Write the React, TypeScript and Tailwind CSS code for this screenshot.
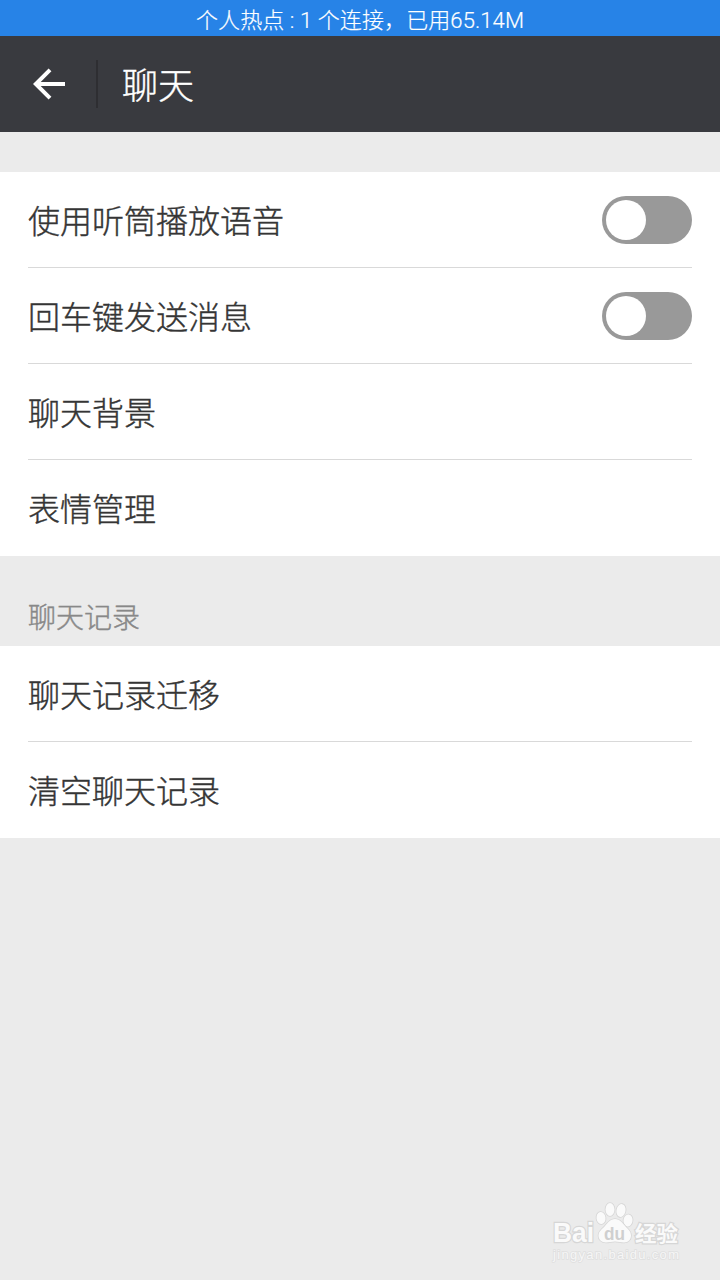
import React, { useState } from 'react';

interface SettingRow {
  label: string;
  toggle?: boolean;
}

const generalRows: SettingRow[] = [
  { label: '使用听筒播放语音', toggle: true },
  { label: '回车键发送消息', toggle: true },
  { label: '聊天背景' },
  { label: '表情管理' },
];

const historyRows: SettingRow[] = [
  { label: '聊天记录迁移' },
  { label: '清空聊天记录' },
];

const Toggle: React.FC<{ label: string }> = ({ label }) => {
  const [on, setOn] = useState(false);

  return (
    <button
      role="switch"
      aria-checked={on}
      aria-label={label}
      onClick={() => setOn(!on)}
      className={`flex h-12 w-[90px] items-center rounded-full p-1 ${
        on ? 'justify-end bg-[#1aad19]' : 'justify-start bg-[#999999]'
      }`}
    >
      <span className="h-10 w-10 rounded-full bg-white" />
    </button>
  );
};

const SettingList: React.FC<{ rows: SettingRow[] }> = ({ rows }) => (
  <ul className="bg-white px-7">
    {rows.map(row => (
      <li
        key={row.label}
        className="flex h-24 items-center justify-between border-b border-[#d9d9d9] last:border-white"
      >
        <span className="pb-[2px] text-[32px] leading-[48px] text-[#353535]">{row.label}</span>
        {row.toggle && <Toggle label={row.label} />}
      </li>
    ))}
  </ul>
);

// Paw mark with the site name on both sides
const Watermark: React.FC = () => (
  <svg
    width="140"
    height="70"
    viewBox="0 0 140 70"
    className="font-['Liberation_Sans','Noto_Sans_CJK_SC',sans-serif] [-webkit-text-stroke:0]"
    fill="#fafafa"
    stroke="#d6d6d6"
    strokeWidth="1.6"
    paintOrder="stroke"
  >
    <text x="3" y="42" fontSize="27" fontWeight="700" strokeWidth="2.4" textLength="41" lengthAdjust="spacingAndGlyphs">Bai</text>
    <ellipse cx="51" cy="18" rx="4.5" ry="6" transform="rotate(-8 51 18)" />
    <ellipse cx="60" cy="9.5" rx="4.5" ry="6.5" />
    <ellipse cx="71" cy="10.5" rx="4.5" ry="6.5" transform="rotate(12 71 10.5)" />
    <ellipse cx="78" cy="20.5" rx="4.5" ry="6" transform="rotate(8 78 20.5)" />
    <path d="M65 19c-5 0-7.5 4-10 7-3 3.5-6.5 5-6.5 9.5 0 4 3 7 7.5 7 3.500 0 5.500-1 9-1s5.500 1 9 1c4.500 0 7-3 7-7 0-4.500-3-6-6-9.500-2.500-3-5-7-10-7z" />
    <text x="54" y="39.5" fontSize="19" fontWeight="700" fill="#cfcfcf" stroke="none" textLength="21" lengthAdjust="spacingAndGlyphs">du</text>
    <text x="85" y="41" fontSize="21" fontWeight="700" strokeWidth="2.4" textLength="43" lengthAdjust="spacingAndGlyphs">经验</text>
    <text x="3" y="59" fontSize="13" fill="#f6f6f6" stroke="#dfdfdf" strokeWidth="1.6" fontWeight="300" textLength="126" lengthAdjust="spacing">jingyan.baidu.com</text>
  </svg>
);

const App: React.FC = () => {
  return (
    <div className="flex h-[1280px] w-[720px] flex-col bg-[#ebebeb] font-['Noto_Sans_CJK_SC',sans-serif] font-light [-webkit-text-stroke:0.4px]">
      {/* Hotspot status */}
      <div className="flex h-9 items-center justify-center bg-[#2783e7] font-['Roboto','Noto_Sans_CJK_SC',sans-serif] text-[22px] leading-9 tracking-[0.1px] whitespace-pre text-white [-webkit-text-stroke:0.2px]">
        <span className="pt-[5px]">个人热点 : 1 个连接，已用65.14M</span>
      </div>

      {/* Title bar */}
      <header className="flex h-24 items-center bg-[#393a3f] text-white">
        <button aria-label="返回" className="flex w-24 justify-center pl-px">
          <svg width="32" height="32" viewBox="0 0 32 32" fill="none" stroke="currentColor" strokeWidth="4">
            <path d="M17 1.8 2.8 16 17 30.2M3 16h29" />
          </svg>
        </button>
        <div className="h-12 w-0.5 bg-[#2e2e32]" />
        <h1 className="pb-0.5 pl-6 text-[36px] leading-[54px]">聊天</h1>
      </header>

      <main className="flex-1 pt-10">
        <SettingList rows={generalRows} />
        <h2 className="h-[90px] px-7 pt-[39px] text-[28px] leading-[42px] text-[#888888]">聊天记录</h2>
        <SettingList rows={historyRows} />
      </main>

      <footer className="flex justify-end pr-[30px] pb-[10px]">
        <Watermark />
      </footer>
    </div>
  );
};

export default App;
